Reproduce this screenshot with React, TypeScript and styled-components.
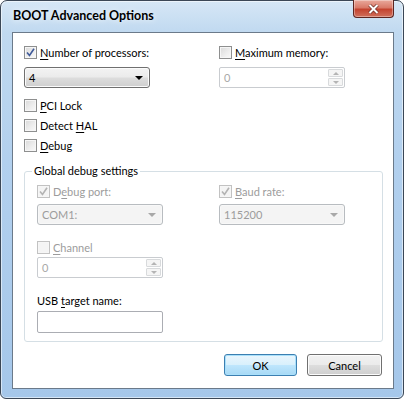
import React from 'react';
import styled, { createGlobalStyle, css } from 'styled-components';

const GlobalStyle = createGlobalStyle`
  html, body {
    margin: 0;
    padding: 0;
    background: #ffffff;
  }
  body {
    font-family: Lato, "Liberation Sans", sans-serif;
    font-size: 11px;
    color: #000;
  }
  * {
    box-sizing: border-box;
  }
`;

type DisabledProps = { $disabled?: boolean };

const Window = styled.div`
  width: 404px;
  height: 399px;
  border: 1px solid #3b4756;
  border-radius: 7px 7px 6px 6px;
  background: linear-gradient(180deg, #d6e7f6 0%, #c0d9f0 8%, #b2d0ee 40%, #a5c7ea 100%);
  box-shadow: inset 0 0 0 1px rgba(255, 255, 255, 0.55);
  padding: 0 9px 9px 11px;
  display: flex;
  flex-direction: column;
`;

const TitleBar = styled.div`
  height: 31px;
  display: flex;
  align-items: flex-start;
  justify-content: space-between;
`;

const Title = styled.div`
  font-weight: 700;
  font-size: 12.5px;
  padding: 7px 0 0 1px;
  color: #000;
  text-shadow: 0 0 6px rgba(255, 255, 255, 0.9);
`;

const CloseButton = styled.div`
  width: 41px;
  height: 18px;
  margin-top: -1px;
  border: 1px solid #5d2520;
  border-top: none;
  border-radius: 0 0 4px 4px;
  background: linear-gradient(180deg, #e9a99c 0%, #d97a69 45%, #c4432f 55%, #d0705c 100%);
  box-shadow: inset 0 0 0 1px rgba(255, 255, 255, 0.35);
  display: flex;
  align-items: center;
  justify-content: center;
`;

const Panel = styled.div`
  flex: 1;
  background: #ffffff;
  border: 1px solid #6b7a8a;
  padding: 9px 10px 0 11px;
  display: flex;
  flex-direction: column;
`;

const TopGrid = styled.div`
  display: grid;
  grid-template-columns: 195px auto;
  row-gap: 5px;
`;

const CheckRow = styled.label<DisabledProps>`
  height: 20px;
  display: flex;
  align-items: center;
  gap: 3px;
  color: ${(p) => (p.$disabled ? '#9c9c9c' : '#000')};
`;

const Box = styled.span<DisabledProps>`
  width: 13px;
  height: 13px;
  flex: none;
  border: 1px solid ${(p) => (p.$disabled ? '#c2c2c2' : '#8e8f8f')};
  background: ${(p) =>
    p.$disabled
      ? '#f4f4f4'
      : 'linear-gradient(135deg, #d9d9d9 0%, #eeeeee 60%, #fafafa 100%)'};
  box-shadow: inset 0 0 0 1px #f6f6f6;
  display: flex;
  align-items: center;
  justify-content: center;
`;

const Key = styled.span`
  text-decoration: underline;
  text-underline-offset: 2px;
`;

const CheckList = styled.div`
  display: flex;
  flex-direction: column;
  margin-top: 7px;
`;

const fieldBase = css<DisabledProps>`
  width: 126px;
  height: 21px;
  border-radius: 3px;
  display: flex;
  align-items: center;
  padding-left: 4px;
  color: ${(p) => (p.$disabled ? '#9c9c9c' : '#000')};
`;

const Combo = styled.div<DisabledProps>`
  ${fieldBase};
  justify-content: space-between;
  padding-right: 6px;
  border: 1px solid ${(p) => (p.$disabled ? '#b8bcc0' : '#707070')};
  background: ${(p) =>
    p.$disabled
      ? '#f4f4f4'
      : 'linear-gradient(180deg, #f3f3f3 0%, #ebebeb 48%, #dddddd 52%, #cfcfcf 100%)'};
  box-shadow: inset 0 0 0 1px ${(p) => (p.$disabled ? '#f8f8f8' : '#fbfbfb')};
`;

const GroupCombo = styled(Combo)`
  margin-top: 3px;
`;

const Arrow = styled.span<DisabledProps>`
  width: 0;
  height: 0;
  border-left: 4px solid transparent;
  border-right: 4px solid transparent;
  border-top: 4px solid ${(p) => (p.$disabled ? '#a8a8a8' : '#000')};
`;

const Spin = styled.div<DisabledProps>`
  ${fieldBase};
  border-radius: 2px;
  padding-right: 1px;
  justify-content: space-between;
  border: 1px solid ${(p) => (p.$disabled ? '#c9ccd0' : '#abadb3')};
  background: #fff;
  color: #a8a8a8;
`;

const SpinButtons = styled.div`
  width: 15px;
  height: 17px;
  display: flex;
  flex-direction: column;
  gap: 1px;
`;

const SpinButton = styled.div`
  flex: 1;
  border: 1px solid #d8dadc;
  border-radius: 1px;
  background: #f5f5f5;
  display: flex;
  align-items: center;
  justify-content: center;
`;

const TinyArrow = styled.span<{ $up?: boolean }>`
  width: 0;
  height: 0;
  border-left: 3px solid transparent;
  border-right: 3px solid transparent;
  ${(p) =>
    p.$up
      ? 'border-bottom: 3px solid #b4b4b4;'
      : 'border-top: 3px solid #b4b4b4;'}
`;

const GroupBox = styled.fieldset`
  margin: 8px 0 0 0;
  padding: 2px 12px 8px 12px;
  border: 1px solid #d5dfe5;
  border-radius: 3px;
`;

const Legend = styled.legend`
  padding: 0 2px;
  margin-left: -5px;
  line-height: 16px;
`;

const GroupGrid = styled.div`
  display: grid;
  grid-template-columns: 182px auto;
`;

const GroupColumn = styled.div`
  display: flex;
  flex-direction: column;
`;

const ChannelRow = styled(CheckRow)`
  margin-top: 12px;
`;

const Label = styled.div`
  height: 20px;
  display: flex;
  align-items: center;
  margin-top: 12px;
`;

const TextInput = styled.div`
  width: 126px;
  height: 22px;
  margin-top: 1px;
  border: 1px solid #abadb3;
  border-radius: 2px;
  background: #fff;
`;

const ButtonRow = styled.div`
  display: flex;
  justify-content: flex-end;
  gap: 10px;
  margin-top: 12px;
  padding-right: 1px;
`;

const Button = styled.div<{ $default?: boolean }>`
  width: ${(p) => (p.$default ? '73px' : '75px')};
  height: 22px;
  border-radius: 3px;
  display: flex;
  align-items: center;
  justify-content: center;
  border: 1px solid ${(p) => (p.$default ? '#3c7fb1' : '#707070')};
  background: ${(p) =>
    p.$default
      ? 'linear-gradient(180deg, #eaf6fd 0%, #d9f0fc 48%, #bee6fd 52%, #a7d9f5 100%)'
      : 'linear-gradient(180deg, #f2f2f2 0%, #ebebeb 48%, #dddddd 52%, #cfcfcf 100%)'};
  box-shadow: inset 0 0 0 1px ${(p) => (p.$default ? '#a9e0fb' : '#fcfcfc')};
`;

function Check({ checked, disabled }: { checked?: boolean; disabled?: boolean }) {
  return (
    <Box $disabled={disabled}>
      {checked && (
        <svg width="9" height="9" viewBox="0 0 9 9">
          <path
            d="M1 4.5 L3.5 7.5 L8 0.8"
            fill="none"
            stroke={disabled ? '#b3b3b3' : '#3f5a99'}
            strokeWidth="1.6"
          />
        </svg>
      )}
    </Box>
  );
}

function Spinner({ value }: { value: string }) {
  return (
    <Spin $disabled>
      <span>{value}</span>
      <SpinButtons>
        <SpinButton>
          <TinyArrow $up />
        </SpinButton>
        <SpinButton>
          <TinyArrow />
        </SpinButton>
      </SpinButtons>
    </Spin>
  );
}

export default function App() {
  return (
    <>
      <GlobalStyle />
      <Window>
        <TitleBar>
          <Title>BOOT Advanced Options</Title>
          <CloseButton>
            <svg width="11" height="10" viewBox="0 0 11 10">
              <path d="M1.5 1 L9.5 9 M9.5 1 L1.5 9" stroke="#6b2a22" strokeWidth="3.4" />
              <path d="M1.5 1 L9.5 9 M9.5 1 L1.5 9" stroke="#ffffff" strokeWidth="2" />
            </svg>
          </CloseButton>
        </TitleBar>
        <Panel>
          <TopGrid>
            <CheckRow>
              <Check checked />
              <span>
                <Key>N</Key>umber of processors:
              </span>
            </CheckRow>
            <CheckRow>
              <Check />
              <span>
                <Key>M</Key>aximum memory:
              </span>
            </CheckRow>
            <Combo>
              <span>4</span>
              <Arrow />
            </Combo>
            <Spinner value="0" />
          </TopGrid>

          <CheckList>
            <CheckRow>
              <Check />
              <span>
                <Key>P</Key>CI Lock
              </span>
            </CheckRow>
            <CheckRow>
              <Check />
              <span>
                Detect <Key>H</Key>AL
              </span>
            </CheckRow>
            <CheckRow>
              <Check />
              <span>
                <Key>D</Key>ebug
              </span>
            </CheckRow>
          </CheckList>

          <GroupBox>
            <Legend>Global debug settings</Legend>
            <GroupGrid>
              <GroupColumn>
                <CheckRow $disabled>
                  <Check checked disabled />
                  <span>
                    D<Key>e</Key>bug port:
                  </span>
                </CheckRow>
                <GroupCombo $disabled>
                  <span>COM1:</span>
                  <Arrow $disabled />
                </GroupCombo>
                <ChannelRow $disabled>
                  <Check disabled />
                  <span>
                    <Key>C</Key>hannel
                  </span>
                </ChannelRow>
                <Spinner value="0" />
              </GroupColumn>
              <GroupColumn>
                <CheckRow $disabled>
                  <Check checked disabled />
                  <span>
                    <Key>B</Key>aud rate:
                  </span>
                </CheckRow>
                <GroupCombo $disabled>
                  <span>115200</span>
                  <Arrow $disabled />
                </GroupCombo>
              </GroupColumn>
            </GroupGrid>
            <Label>
              <span>
                USB <Key>t</Key>arget name:
              </span>
            </Label>
            <TextInput />
          </GroupBox>

          <ButtonRow>
            <Button $default>OK</Button>
            <Button>Cancel</Button>
          </ButtonRow>
        </Panel>
      </Window>
    </>
  );
}
